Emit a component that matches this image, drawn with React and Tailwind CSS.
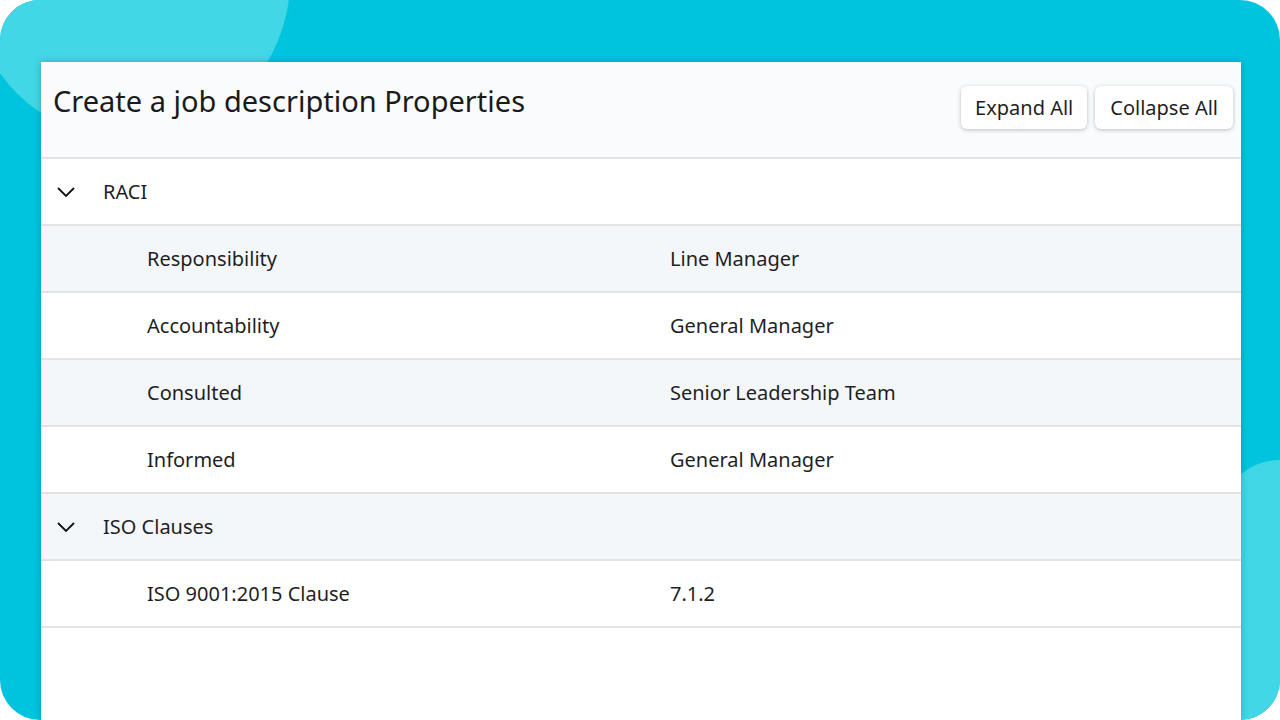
const rows = [
  { type: "group", label: "RACI" },
  { label: "Responsibility", value: "Line Manager", shade: true },
  { label: "Accountability", value: "General Manager" },
  { label: "Consulted", value: "Senior Leadership Team", shade: true },
  { label: "Informed", value: "General Manager" },
  { type: "group", label: "ISO Clauses", shade: true },
  { label: "ISO 9001:2015 Clause", value: "7.1.2" },
];

function Chevron() {
  return (
    <svg width="20" height="20" viewBox="0 0 20 20" fill="none" stroke="#111" strokeWidth="1.8">
      <path d="M2 6l8 8 8-8" />
    </svg>
  );
}

export default function App() {
  return (
    <div className="w-[1280px] h-[720px] bg-white overflow-hidden">
      <div className="relative w-full h-full rounded-[40px] bg-[#00c4de] overflow-hidden pt-[62px] pl-[41px]">
        <div className="absolute left-[20px] top-[-330px] w-[300px] h-[450px] rounded-full bg-[#42d7e6]" style={{ width: 260, left: 12 }}></div>
        <div className="absolute left-[-30px] top-[-420px] w-[320px] h-[560px] rounded-full bg-[#42d7e6]"></div>
        <div className="absolute right-[-60px] top-[460px] w-[120px] h-[300px] rounded-full bg-[#42d7e6]"></div>
        <div className="relative w-[1200px] h-[658px] bg-white shadow-[0_0_8px_rgba(0,0,0,0.2)] font-['Inter',sans-serif] text-[#1f1f1f]">
          <div className="h-[97px] bg-[#f9fbfd] border-b-2 border-[#e3e3e3] flex justify-between pl-[12px] pr-[8px]">
            <h1 className="font-['Roboto',sans-serif] text-[29px] text-[#1a1a1a] mt-[20px] leading-[38px]">Create a job description Properties</h1>
            <div className="flex gap-2 mt-[24px] h-[43px]">
              <button className="px-[14px] bg-white rounded-md shadow-[0_1px_4px_rgba(0,0,0,0.25)] text-[20px]">Expand All</button>
              <button className="px-[15px] bg-white rounded-md shadow-[0_1px_4px_rgba(0,0,0,0.25)] text-[20px]">Collapse All</button>
            </div>
          </div>
          {rows.map((r, i) => (
            <div key={i} className={`h-[67px] border-b-2 border-[#e3e3e3] flex items-center text-[20px] ${r.shade ? "bg-[#f4f7fa]" : "bg-white"}`}>
              {r.type === "group" ? (
                <>
                  <div className="ml-[15px] w-[20px]"><Chevron /></div>
                  <span className="ml-[27px]">{r.label}</span>
                </>
              ) : (
                <>
                  <span className="ml-[106px] w-[523px]">{r.label}</span>
                  <span>{r.value}</span>
                </>
              )}
            </div>
          ))}
        </div>
      </div>
    </div>
  );
}
